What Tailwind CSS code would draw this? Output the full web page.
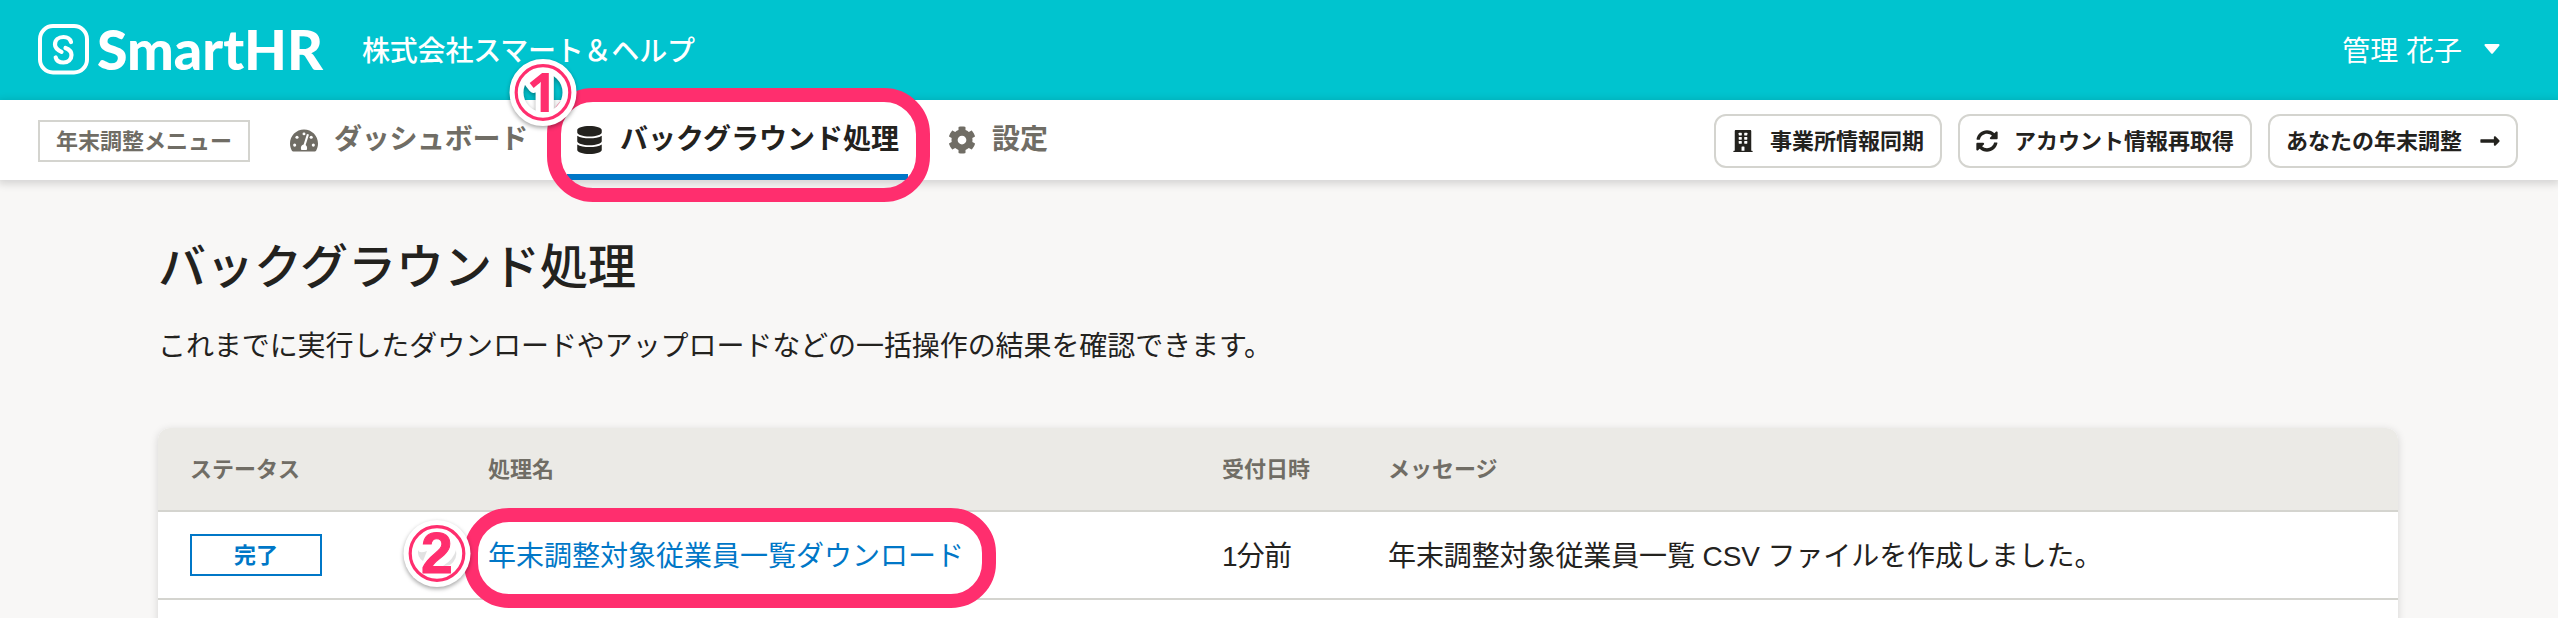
<!DOCTYPE html>
<html lang="ja">
<head>
<meta charset="utf-8">
<title>バックグラウンド処理</title>
<script src="https://cdn.jsdelivr.net/npm/@tailwindcss/browser@4"></script>
</head>
<body class="relative h-[618px] overflow-hidden bg-[#f8f7f6] font-['Liberation_Sans','Noto_Sans_CJK_JP',sans-serif] text-[28px] leading-none text-[#23221e]">

<header class="flex h-[100px] items-center justify-between bg-[#00c4cf] pl-[38px] pr-[58px] text-white">
  <div class="flex items-center">
    <svg class="h-20 w-[290px] overflow-visible" viewBox="0 -10 290 80" fill="none">
      <rect x="2" y="6" width="47" height="46.500" rx="13" stroke="#fff" stroke-width="4"/>
      <path d="M33 22C32 18.500 29 17 25.500 17C20.500 17 17 20 17 24.500C17 28 19.500 30 23.500 31.800M27.500 28C31.500 29.500 33.500 31.500 33.500 35C33.500 39.500 30 42.500 25.500 42.500C21.500 42.500 18.500 41 17.700 37.500" stroke="#fff" stroke-width="4.200" stroke-linecap="round"/>
      <text x="59" y="50" fill="#fff" textLength="226" lengthAdjust="spacingAndGlyphs" font-family="Lato, sans-serif" font-weight="900" font-size="55">SmartHR</text>
    </svg>
    <span class="ml-[34px] pt-1 font-medium tracking-[-0.2px]">株式会社スマート＆ヘルプ</span>
  </div>
  <div class="flex items-center gap-[22px]">
    <span class="whitespace-nowrap pt-1">管理 花子</span>
    <svg class="mt-[-2px] h-[10px] w-4" viewBox="0 0 16 10" fill="#fff"><path d="M1.500 0h13q1.500 .3 .8 1.700L9 9.200q-1 1.100-2 0L.7 1.700Q0 .3 1.500 0z"/></svg>
  </div>
</header>

<nav class="relative flex h-20 items-center bg-white pl-[38px] pr-10 font-bold text-[#706d65] shadow-[0_2px_8px_2px_rgba(0,0,0,0.14)]">
  <div class="mt-[2px] flex h-[42px] w-[212px] items-center justify-center border-2 border-[#d4d4cf] pt-[2px] text-[22px]">年末調整メニュー</div>
  <div class="ml-10 flex h-20 items-center gap-4">
    <svg class="h-[25px] w-7" viewBox="0 0 576 512"><path fill="#706d65" d="M288 32C128.940 32 0 160.940 0 320c0 52.800 14.250 102.260 39.060 144.800 5.610 9.620 16.300 15.200 27.440 15.200h443c11.140 0 21.830-5.580 27.440-15.200C561.750 422.260 576 372.800 576 320c0-159.060-128.940-288-288-288z"/><g fill="#fff"><circle cx="288" cy="120" r="30"/><circle cx="144" cy="190" r="32"/><circle cx="96" cy="350" r="32"/><circle cx="480" cy="350" r="32"/><circle cx="436" cy="190" r="32"/><path d="M348 120l42 14-68 215q30 20 30 60 0 22-10 40H234q-10-18-10-40 0-58 56-72z"/></g></svg>
    <span class="w-[196px] whitespace-nowrap tracking-[-0.3px]">ダッシュボード</span>
  </div>
  <div class="ml-[37px] flex h-20 w-[341px] items-center border-b-6 border-[#0077c7] pl-[10px] pt-[6px] text-[#23221e]">
    <svg class="h-7 w-[25px]" viewBox="0 0 448 512" fill="#23221e"><path d="M448 73.143v45.714C448 159.143 347.667 192 224 192S0 159.143 0 118.857V73.143C0 32.857 100.333 0 224 0s224 32.857 224 73.143zM448 176v102.857C448 319.143 347.667 352 224 352S0 319.143 0 278.857V176c48.125 33.143 136.208 48.572 224 48.572S399.874 209.143 448 176zm0 160v102.857C448 479.143 347.667 512 224 512S0 479.143 0 438.857V336c48.125 33.143 136.208 48.572 224 48.572S399.874 369.143 448 336z"/></svg>
    <span class="ml-[18px]">バックグラウンド処理</span>
  </div>
  <div class="ml-10 flex h-20 items-center gap-4">
    <svg class="h-7 w-7" viewBox="0 0 512 512" fill="#706d65"><path d="M487.400 315.700l-42.600-24.600c4.300-23.200 4.300-47 0-70.200l42.600-24.600c4.900-2.800 7.100-8.600 5.500-14-11.100-35.600-30-67.800-54.700-94.600-3.800-4.100-10-5.100-14.800-2.300L380.800 110c-17.900-15.400-38.500-27.300-60.800-35.100V25.800c0-5.600-3.900-10.500-9.400-11.700-36.700-8.200-74.300-7.800-109.200 0-5.500 1.200-9.400 6.100-9.400 11.700V75c-22.200 7.900-42.800 19.800-60.800 35.100L88.700 85.500c-4.900-2.800-11-1.900-14.800 2.300-24.700 26.700-43.600 58.900-54.700 94.600-1.700 5.400.6 11.200 5.500 14L67.300 221c-4.300 23.200-4.300 47 0 70.200l-42.600 24.600c-4.900 2.800-7.100 8.600-5.500 14 11.100 35.600 30 67.800 54.700 94.600 3.800 4.100 10 5.100 14.800 2.300l42.600-24.600c17.900 15.400 38.500 27.300 60.800 35.100v49.200c0 5.600 3.900 10.500 9.400 11.700 36.700 8.200 74.300 7.800 109.200 0 5.500-1.200 9.400-6.100 9.400-11.700v-49.200c22.200-7.900 42.800-19.800 60.800-35.100l42.600 24.600c4.900 2.800 11 1.900 14.800-2.300 24.700-26.700 43.600-58.900 54.700-94.600 1.500-5.500-.7-11.300-5.600-14.100zM256 336c-44.100 0-80-35.900-80-80s35.900-80 80-80 80 35.900 80 80-35.900 80-80 80z"/></svg>
    <span>設定</span>
  </div>
  <div class="ml-auto mt-[2px] flex gap-4 whitespace-nowrap text-[22px] text-[#23221e]">
    <button class="flex h-[54px] w-[228px] items-center justify-between rounded-xl border-2 border-[#d4d4cf] pl-[17px] pr-4">
      <svg class="h-[22px] w-[20px]" viewBox="0 0 448 512"><path fill="#23221e" d="M436 480h-20V24c0-13.255-10.745-24-24-24H56C42.745 0 32 10.745 32 24v456H12c-6.627 0-12 5.373-12 12v20h448v-20c0-6.627-5.373-12-12-12z"/><g fill="#fff"><rect x="124" y="64" width="72" height="64" rx="10"/><rect x="252" y="64" width="72" height="64" rx="10"/><rect x="124" y="160" width="72" height="64" rx="10"/><rect x="252" y="160" width="72" height="64" rx="10"/><rect x="124" y="256" width="72" height="64" rx="10"/><rect x="252" y="256" width="72" height="64" rx="10"/><path d="M190 480v-84q0-12 12-12h44q12 0 12 12v84z"/></g></svg>
      <span class="pt-px">事業所情報同期</span>
    </button>
    <button class="flex h-[54px] w-[294px] items-center justify-between rounded-xl border-2 border-[#d4d4cf] px-4">
      <svg class="h-[22px] w-[22px]" viewBox="0 0 512 512" fill="#23221e"><path d="M370.720 133.280C339.458 104.008 298.888 87.962 255.848 88c-77.458.068-144.328 53.178-162.791 126.850-1.344 5.363-6.122 9.150-11.651 9.150H24.103c-7.498 0-13.194-6.807-11.807-14.176C33.933 94.924 134.813 8 256 8c66.448 0 126.791 26.136 171.315 68.685L463.030 40.970C478.149 25.851 504 36.559 504 57.941V192c0 13.255-10.745 24-24 24H345.941c-21.382 0-32.090-25.851-16.971-40.971l41.750-41.749zM32 296h134.059c21.382 0 32.090 25.851 16.971 40.971l-41.750 41.750c31.262 29.273 71.835 45.319 114.876 45.280 77.418-.070 144.315-53.144 162.787-126.849 1.344-5.363 6.122-9.150 11.651-9.150h57.304c7.498 0 13.194 6.807 11.807 14.176C478.067 417.076 377.187 504 256 504c-66.448 0-126.791-26.136-171.315-68.685L48.970 471.030C33.851 486.149 8 475.441 8 454.059V320c0-13.255 10.745-24 24-24z"/></svg>
      <span class="pt-px">アカウント情報再取得</span>
    </button>
    <button class="flex h-[54px] w-[250px] items-center justify-between rounded-xl border-2 border-[#d4d4cf] px-4">
      <span class="pt-px">あなたの年末調整</span>
      <svg class="h-[22px] w-5" viewBox="0 0 448 512" fill="#23221e"><path d="M313.941 216H12c-6.627 0-12 5.373-12 12v56c0 6.627 5.373 12 12 12h301.941v46.059c0 21.382 25.851 32.090 40.971 16.971l86.059-86.059c9.373-9.373 9.373-24.569 0-33.941l-86.059-86.059c-15.119-15.119-40.971-4.411-40.971 16.971V216z"/></svg>
    </button>
  </div>
</nav>

<main class="pl-[158px] pr-[160px] pt-16">
  <h1 class="h-12 text-[48px] font-medium leading-[48px]">バックグラウンド処理</h1>
  <p class="mt-[41px] h-7 leading-7 tracking-[-0.08px]">これまでに実行したダウンロードやアップロードなどの一括操作の結果を確認できます。</p>

  <section class="mt-[67px] h-[220px] overflow-hidden rounded-t-xl bg-white shadow-[0_2px_8px_0_rgba(0,0,0,0.14)]">
    <div class="grid h-[84px] grid-cols-[298px_734px_166px_1fr] items-center border-b-2 border-[#d4d4cf] bg-[#ebeae6] pl-8 pt-[2px] text-[22px] font-bold text-[#706d65]">
      <span>ステータス</span><span>処理名</span><span>受付日時</span><span>メッセージ</span>
    </div>
    <div class="grid h-[88px] grid-cols-[298px_734px_166px_1fr] items-center border-b-2 border-[#d4d4cf] pl-8">
      <span class="flex h-[42px] w-[132px] items-center justify-center border-2 border-[#0077c7] pt-px text-[22px] font-bold text-[#0077c7]">完了</span>
      <a class="pt-1 text-[#0077c7]">年末調整対象従業員一覧ダウンロード</a>
      <span class="pt-1 tracking-[-0.8px]">1分前</span>
      <span class="pt-1 tracking-[-0.1px]">年末調整対象従業員一覧 CSV ファイルを作成しました。</span>
    </div>
  </section>
</main>

<!-- Step annotations drawn over the page -->
<div class="absolute left-[547px] top-[88px] h-[114px] w-[383px] rounded-[46px] border-14 border-[#ff2e6e]"></div>
<div class="absolute left-[464px] top-[508px] h-[100px] w-[532px] rounded-[45px] border-14 border-[#ff2e6e]"></div>
<svg class="absolute left-[503px] top-[53px] h-20 w-20 drop-shadow-[0_2px_2px_rgba(0,0,0,0.35)]" viewBox="0 0 80 80">
  <circle cx="40" cy="39.500" r="26.500" fill="none" stroke="#fff" stroke-width="14"/>
  <text class="[paint-order:stroke]" x="23.500" y="59.200" font-family="Noto Sans, sans-serif" font-weight="700" font-size="54" fill="#ff2e6e" stroke="#fff" stroke-width="10" stroke-linejoin="round">1</text>
  <circle cx="40" cy="39.500" r="26.800" fill="none" stroke="#ff2e6e" stroke-width="3.200"/>
</svg>
<svg class="absolute left-[397px] top-[514px] h-20 w-20 drop-shadow-[0_2px_2px_rgba(0,0,0,0.35)]" viewBox="0 0 80 80">
  <circle cx="40" cy="39.500" r="33.500" fill="#fff"/>
  <path d="M21 36q1 4 9 1l-4 10q-6-4-5-11zM59 36q2 9-6 15l-7 1q11-7 13-16z" fill="#e2e2e2"/>
  <circle cx="40" cy="39.500" r="26.800" fill="none" stroke="#ff2e6e" stroke-width="3.200"/>
  <text x="24" y="59.200" font-family="Liberation Sans, sans-serif" font-weight="700" font-size="57" fill="#ff2e6e" stroke="#ff2e6e" stroke-width="1">2</text>
</svg>
</body>
</html>
